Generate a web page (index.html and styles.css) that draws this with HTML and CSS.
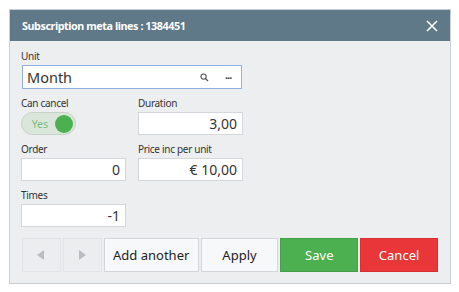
FILE: index.html
```html
<!DOCTYPE html>
<html lang="en">
<head>
    <meta charset="UTF-8">
    <title>Subscription meta lines</title>
    <link rel="stylesheet" href="styles.css">
</head>
<body>
    <div class="dialog">
        <div class="dialog-header">
            <span class="dialog-title">Subscription meta lines : 1384451</span>
            <span class="close-btn">
                <svg width="12" height="12" viewBox="0 0 12 12"><path d="M1 1L11 11M11 1L1 11" stroke="#fff" stroke-width="1.6" fill="none"/></svg>
            </span>
        </div>
        <div class="dialog-body">
            <div class="field field-wide">
                <label>Unit</label>
                <div class="input input-lookup">
                    <span class="lookup-text">Month</span>
                    <svg class="lookup-icon" width="9" height="9" viewBox="0 0 9 9"><circle cx="3.6" cy="3.6" r="2.6" stroke="#555" stroke-width="1.1" fill="none"/><path d="M5.5 5.5L8 8" stroke="#555" stroke-width="1.3"/></svg>
                    <span class="lookup-dots">&middot;&middot;&middot;</span>
                </div>
            </div>
            <div class="field">
                <label>Can cancel</label>
                <div class="toggle">
                    <span class="toggle-text">Yes</span>
                    <span class="toggle-knob"></span>
                </div>
            </div>
            <div class="field">
                <label>Duration</label>
                <div class="input num">3,00</div>
            </div>
            <div class="field">
                <label>Order</label>
                <div class="input num">0</div>
            </div>
            <div class="field">
                <label>Price inc per unit</label>
                <div class="input num">€ 10,00</div>
            </div>
            <div class="field">
                <label>Times</label>
                <div class="input num">-1</div>
            </div>
        </div>
        <div class="dialog-footer">
            <button class="btn btn-nav"><svg width="8" height="10" viewBox="0 0 8 10"><path d="M7 0L0 5L7 10Z" fill="#b9bdc1"/></svg></button>
            <button class="btn btn-nav"><svg width="8" height="10" viewBox="0 0 8 10"><path d="M1 0L8 5L1 10Z" fill="#b9bdc1"/></svg></button>
            <button class="btn btn-light btn-add">Add another</button>
            <button class="btn btn-light">Apply</button>
            <button class="btn btn-save">Save</button>
            <button class="btn btn-cancel">Cancel</button>
        </div>
    </div>
</body>
</html>
```

FILE: styles.css
```css
:root {
    --header-bg: #5f7988;
    --body-bg: #eceef0;
    --border-color: #c9cfd4;
    --input-border: #d3d7db;
    --green: #4caf50;
    --red: #e83639;
}

body {
    margin: 0;
    background: #fff;
    font-family: "Noto Sans", "Open Sans", sans-serif;
    color: #222;
}

.dialog {
    margin: 9px;
    width: 440px;
    border: 1px solid var(--border-color);
    background: var(--body-bg);
}

.dialog-header {
    height: 31px;
    background: var(--header-bg);
    display: flex;
    align-items: center;
    justify-content: space-between;
    padding: 0 12px 0 12px;
}

.dialog-title {
    color: #fff;
    font-size: 10.8px;
    font-weight: bold;
    letter-spacing: -0.45px;
}

.close-btn {
    display: flex;
    width: 12px;
    height: 12px;
}

.dialog-body {
    display: grid;
    grid-template-columns: 105px 105px;
    column-gap: 12px;
    row-gap: 7px;
    padding: 8px 12px 0 11px;
}

.field {
    display: flex;
    flex-direction: column;
}

.field-wide {
    grid-column: 1 / 3;
}

.field label {
    font-size: 10px;
    line-height: 14px;
    height: 14px;
    margin-bottom: 2px;
    color: #333;
    letter-spacing: -0.3px;
}

.input {
    height: 23px;
    box-sizing: border-box;
    background: #fff;
    border: 1px solid var(--input-border);
    font-size: 14px;
    line-height: 21px;
    padding: 0 5px;
    color: #333;
}

.num {
    text-align: right;
}

.input-lookup {
    width: 220px;
    height: 24px;
    margin-left: 1px;
    border-color: #8fb1dc;
    display: flex;
    align-items: center;
    padding: 0 6px 0 4px;
}

.lookup-text {
    flex: 1;
    font-size: 14.5px;
}

.lookup-icon {
    margin-right: 16px;
}

.lookup-dots {
    font-size: 11px;
    font-weight: bold;
    letter-spacing: -1px;
    color: #444;
    width: 10px;
}

.toggle {
    width: 55px;
    height: 23px;
    box-sizing: border-box;
    border: 1px solid #c6d3c6;
    border-radius: 12px;
    background: #dbe6db;
    display: flex;
    align-items: center;
    justify-content: flex-end;
    padding-right: 2px;
}

.toggle-text {
    color: #7fbb80;
    font-size: 10.5px;
    margin-right: 7px;
}

.toggle-knob {
    width: 18px;
    height: 18px;
    border-radius: 50%;
    background: var(--green);
}

.dialog-footer {
    display: flex;
    gap: 2px;
    padding: 11px 12px 11px 12px;
}

.btn {
    height: 34px;
    box-sizing: border-box;
    border: 1px solid #d3d7db;
    font-family: inherit;
    font-size: 13px;
    padding: 0;
    width: 78px;
    color: #222;
    display: flex;
    align-items: center;
    justify-content: center;
}

.btn-nav {
    width: 39px;
    background: #ebedef;
    border-color: #e1e4e7;
}

.btn-light {
    background: #f7f8fa;
}

.btn-add {
    width: 95px;
}

.btn-save {
    background: var(--green);
    border-color: #45a049;
    color: #fff;
}

.btn-cancel {
    background: var(--red);
    border-color: #d73034;
    color: #fff;
}
```
